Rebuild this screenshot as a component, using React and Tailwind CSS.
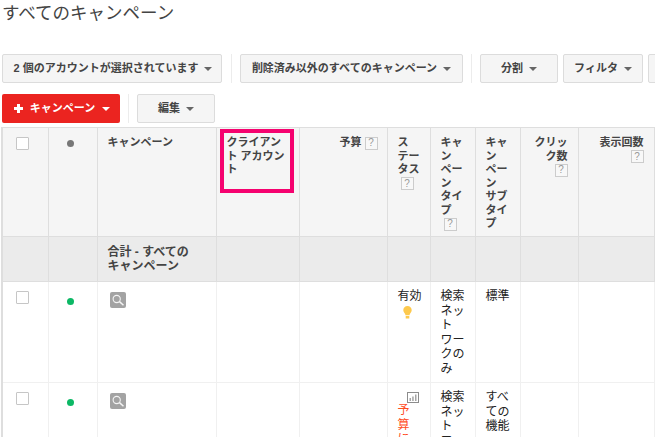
const font = "font-['Liberation_Sans','Noto_Sans_CJK_JP',sans-serif]";

function Caret({ className = "border-t-[#666]" }) {
  return <span className={`inline-block w-0 h-0 border-x-[4px] border-x-transparent border-t-[4px] ${className}`}></span>;
}

function Btn({ children, className = "" }) {
  return (
    <button className={`h-[29px] shrink-0 flex items-center justify-center gap-[6px] rounded-[2px] border border-[#dcdcdc] bg-[#f5f5f5] text-[11px] font-bold text-[#444] ${className}`}>
      {children}
      <Caret />
    </button>
  );
}

function Help({ className = "" }) {
  return (
    <span className={`inline-flex w-[13px] h-[13px] items-center justify-center border border-[#ccc] bg-[#f8f8f8] text-[10px] font-normal leading-none text-[#999] ${className}`}>?</span>
  );
}

function Checkbox() {
  return <span className="block w-[13px] h-[13px] ml-[13px] rounded-[1px] border border-[#c6c6c6] bg-white"></span>;
}

function SearchBadge() {
  return (
    <span className="ml-[4px] block w-[16px] h-[16px] rounded-[2px] bg-[#a3a3a3]">
      <svg className="block" width="16" height="16" viewBox="0 0 16 16" fill="none" stroke="#f4f4f4">
        <circle cx="6.7" cy="7" r="3.6" strokeWidth="1.1" />
        <path d="M9.500 9.600 13.500 13.300" strokeWidth="1.500" />
      </svg>
    </span>
  );
}

function Bulb() {
  return (
    <svg className="ml-[5px] mt-[2px]" width="9" height="13" viewBox="0 0 9 13">
      <path d="M4.500 0C2 0 .3 1.700.3 4c0 1.700 1 2.700 1.700 3.800.3.500.4 1 .4 1.400h4.200c0-.4.1-.9.4-1.400C7.700 6.700 8.700 5.700 8.700 4 8.700 1.700 7 0 4.500 0Z" fill="#fdc94d" />
      <rect x="2.700" y="10" width="3.600" height="2.500" fill="#fdc94d" />
    </svg>
  );
}

function BarsIcon() {
  return (
    <svg className="ml-[9px]" width="12" height="11" viewBox="0 0 12 11">
      <rect x=".5" y=".5" width="11" height="10" fill="none" stroke="#8c8c8c" />
      <path d="M2.500 6h1.500v3H2.500zM5.200 4.500h1.500V9H5.200zM8 2.500h1.500V9H8z" fill="#a5a5a5" />
    </svg>
  );
}

const widths = [46, 49, 119, 83, 88, 43, 45, 45, 58, 76];

export default function App() {
  const th = "align-top border-r border-[#dedede] pt-[8px] px-[10px] text-[11px] leading-[13.500px] font-bold text-[#444]";
  const td = "align-top border-r border-[#f0f0f0] pt-[7px] text-[12px] leading-[14.500px] text-[#222]";
  const total = "border-r border-[#dedede]";

  return (
    <div className={`w-[655px] h-[437px] overflow-hidden bg-white ${font}`}>
      <h1 className="h-[54px] pl-[2px] pt-[1px] text-[17.500px] leading-[24px] font-normal text-[#444]">すべてのキャンペーン</h1>

      <div className="flex items-center pl-[2px] w-[700px]">
        <Btn className="w-[220px] pl-[2px]">2 個のアカウントが選択されています</Btn>
        <span className="w-px h-[29px] bg-[#ececec] mx-[8.500px] shrink-0"></span>
        <Btn className="w-[223px]">削除済み以外のすべてのキャンペーン</Btn>
        <span className="w-px h-[29px] bg-[#ececec] mx-[8px] shrink-0"></span>
        <Btn className="w-[78px]">分割</Btn>
        <Btn className="w-[80px] ml-[5px]">フィルタ</Btn>
        <Btn className="w-[60px] ml-[5px]"></Btn>
      </div>

      <div className="flex items-center pl-[2px] mt-[11px]">
        <button className="h-[29px] w-[118px] pl-[2px] flex items-center justify-center gap-[7px] rounded-[2px] bg-[#eb2420] text-[11px] font-bold text-white">
          <svg width="9" height="9" viewBox="0 0 9 9"><path d="M3 0h3v3h3v3H6v3H3V6H0V3h3z" fill="#fff" /></svg>
          <span>キャンペーン</span>
          <Caret className="border-t-white" />
        </button>
        <span className="w-px h-[29px] bg-[#ececec] mx-[8px]"></span>
        <Btn className="w-[78px]">編集</Btn>
      </div>

      <table className="mt-[4px] ml-[1px] table-fixed border-collapse w-[652px] border-l-2 border-[#dedede]">
        <colgroup>
          {widths.map((w, i) => (
            <col key={i} width={w} />
          ))}
        </colgroup>
        <tbody>
          <tr className="h-[109px] bg-[#f5f5f5] border-y border-[#dedede]">
            <th className={`${th} !pt-[9px] !px-0`}><Checkbox /></th>
            <th className={`${th} !pt-[12px] !px-0`}><span className="block w-[7px] h-[7px] ml-[18px] rounded-full bg-[#777]"></span></th>
            <th className={`${th} text-left`}>キャンペーン</th>
            <th className={`${th} text-left relative`}>
              <span className="absolute left-[3px] top-[1px] w-[74px] h-[64px] border-[4px] border-[#f5026f]"></span>
              <span className="block">クライアント アカウント</span>
            </th>
            <th className={`${th} text-right !pr-[9px]`}>予算 <Help /></th>
            <th className={`${th} text-left text-[#222]`}>ス<br />テー<br />タス<Help className="ml-[3px] flex" /></th>
            <th className={`${th} text-left text-[#222]`}>キャ<br />ン<br />ペー<br />ン<br />タイ<br />プ<Help className="ml-[3px] flex" /></th>
            <th className={`${th} text-left text-[#222]`}>キャ<br />ン<br />ペー<br />ン<br />サブ<br />タイ<br />プ</th>
            <th className={`${th} text-right`}>クリック数 <Help /></th>
            <th className={`${th} text-right`}>表示回数 <Help /></th>
          </tr>
          <tr className="h-[45px] bg-[#ebebeb] border-b border-[#dedede]">
            <td className={total}></td>
            <td className={total}></td>
            <td className={`${total} px-[10px] text-[12px] leading-[14px] font-bold text-[#444]`}>合計 - すべての<br />キャンペーン</td>
            <td className={total}></td>
            <td className={total}></td>
            <td className={total}></td>
            <td className={total}></td>
            <td className={total}></td>
            <td className={total}></td>
            <td className={total}></td>
          </tr>
          <tr className="h-[101px] border-b border-[#f0f0f0]">
            <td className={`${td} !pt-[9px]`}><Checkbox /></td>
            <td className={`${td} !pt-[16px]`}><span className="block w-[7px] h-[7px] ml-[18px] rounded-full bg-[#0cb865]"></span></td>
            <td className={`${td} px-[8px] !pt-[10px]`}><SearchBadge /></td>
            <td className={td}></td>
            <td className={td}></td>
            <td className={`${td} px-[10px]`}><span className="block w-[26px]">有効</span><Bulb /></td>
            <td className={`${td} px-[10px]`}>検索<br />ネッ<br />ト<br />ワー<br />クの<br />み</td>
            <td className={`${td} px-[10px]`}>標準</td>
            <td className={td}></td>
            <td className={td}></td>
          </tr>
          <tr className="h-[101px]">
            <td className={`${td} !pt-[9px]`}><Checkbox /></td>
            <td className={`${td} !pt-[16px]`}><span className="block w-[7px] h-[7px] ml-[18px] rounded-full bg-[#0cb865]"></span></td>
            <td className={`${td} px-[8px] !pt-[10px]`}><SearchBadge /></td>
            <td className={td}></td>
            <td className={td}></td>
            <td className={`${td} px-[10px] !pt-[9px] text-[#ff4d1f]`}><BarsIcon /><div className="w-[12px]">予算に</div></td>
            <td className={`${td} px-[10px]`}>検索<br />ネッ<br />ト<br />ワー<br />クの<br />み</td>
            <td className={`${td} px-[10px]`}>すべ<br />ての<br />機能</td>
            <td className={td}></td>
            <td className={td}></td>
          </tr>
        </tbody>
      </table>
    </div>
  );
}
